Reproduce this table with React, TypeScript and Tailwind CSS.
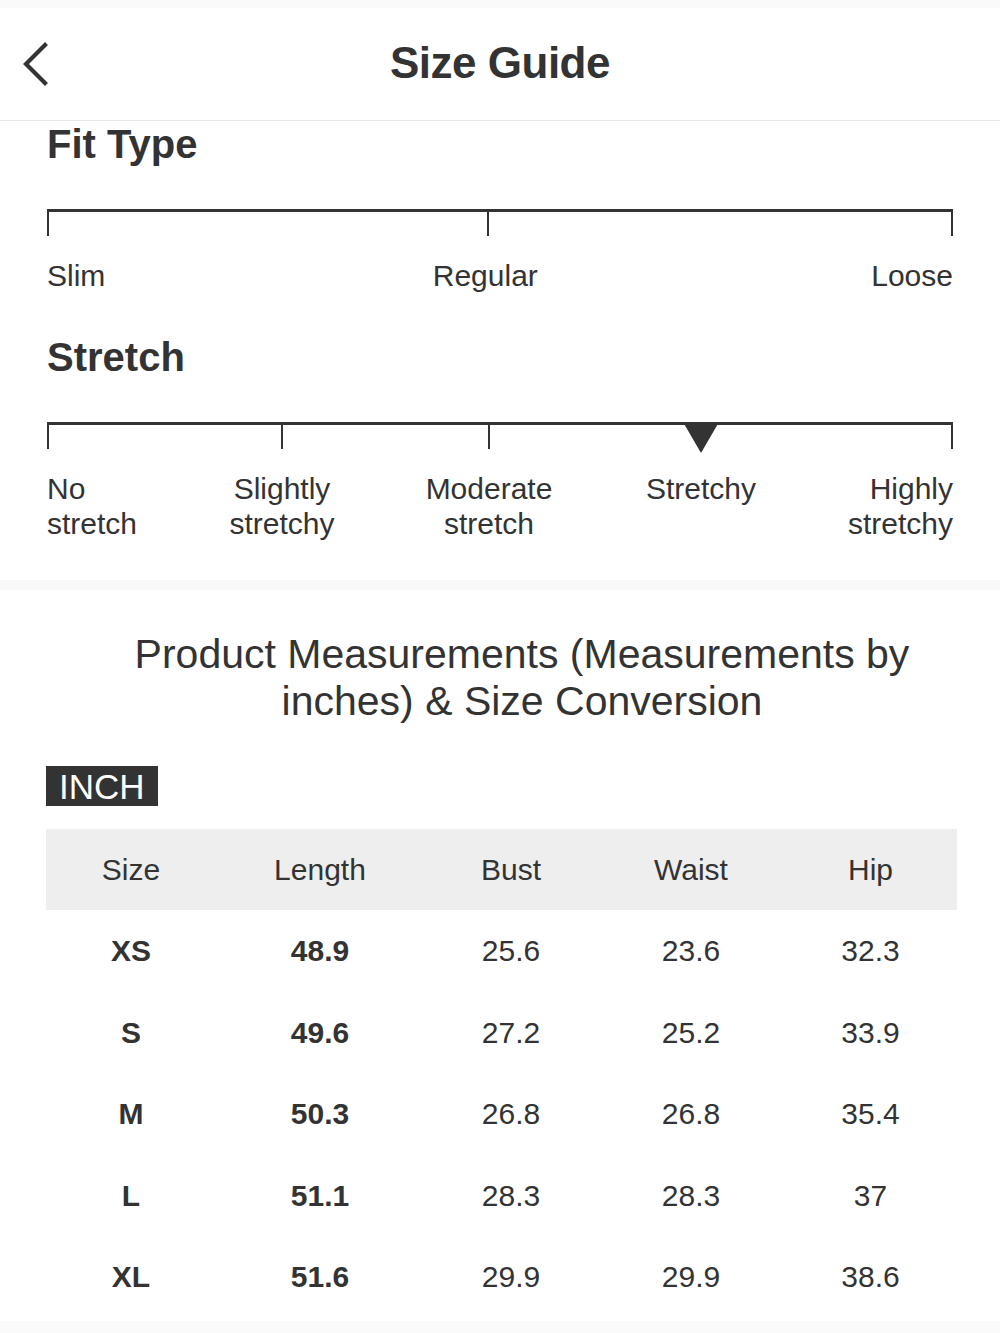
const fitLabels = ["Slim", "Regular", "Loose"]

const stretchLabels = [
  { lines: ["No", "stretch"], pos: 0, align: "left" },
  { lines: ["Slightly", "stretchy"], pos: 235, align: "center" },
  { lines: ["Moderate", "stretch"], pos: 442, align: "center" },
  { lines: ["Stretchy"], pos: 654, align: "center" },
  { lines: ["Highly", "stretchy"], pos: 906, align: "right" },
]

const rows = [
  ["XS", "48.9", "25.6", "23.6", "32.3"],
  ["S", "49.6", "27.2", "25.2", "33.9"],
  ["M", "50.3", "26.8", "26.8", "35.4"],
  ["L", "51.1", "28.3", "28.3", "37"],
  ["XL", "51.6", "29.9", "29.9", "38.6"],
]

const headers = ["Size", "Length", "Bust", "Waist", "Hip"]

export default function App() {
  return (
    <div className="w-[1000px] min-h-[1333px] bg-white text-[#333] font-['Liberation_Sans',Arial,sans-serif]">
      {/* Top bar */}
      <div className="h-[8px] bg-[#fafafa]" />
      <header className="relative flex h-[113px] items-center justify-center border-b border-[#e8e8e8]">
        <button className="absolute left-[19px] top-[34px] p-0">
          <svg width="30" height="44" viewBox="0 0 30 44" fill="none">
            <path d="M26 3 L7 22 L26 41" stroke="#333" strokeWidth="4.2" strokeLinecap="square" />
          </svg>
        </button>
        <h1 className="mt-[-2px] text-[44px] font-bold leading-none tracking-[-0.5px]">Size Guide</h1>
      </header>

      {/* Fit & stretch */}
      <section className="px-[47px] pb-[39px]">
        <h2 className="h-[48px] text-[40px] font-bold leading-[46px]">Fit Type</h2>
        <div className="relative mt-[40px] h-[27px] border-t-[3px] border-[#333]">
          <div className="absolute left-0 top-0 h-full w-[2px] bg-[#333]" />
          <div className="absolute left-[440px] top-0 h-full w-[2px] bg-[#333]" />
          <div className="absolute right-0 top-0 h-full w-[2px] bg-[#333]" />
        </div>
        <div className="mt-[22px] flex justify-between text-[30px] leading-[35px]">
          {fitLabels.map((l, i) => (
            <span key={i} className={i === 1 ? "ml-[-6px]" : ""}>{l}</span>
          ))}
        </div>

        <h2 className="mt-[41px] h-[48px] text-[40px] font-bold leading-[46px]">Stretch</h2>
        <div className="relative mt-[40px] h-[27px] border-t-[3px] border-[#333]">
          <div className="absolute left-0 top-0 h-full w-[2px] bg-[#333]" />
          <div className="absolute left-[234px] top-0 h-full w-[2px] bg-[#333]" />
          <div className="absolute left-[441px] top-0 h-full w-[2px] bg-[#333]" />
          <div className="absolute right-0 top-0 h-full w-[2px] bg-[#333]" />
          <svg className="absolute left-[636px] top-[-3px]" width="36" height="31" viewBox="0 0 36 31">
            <path d="M0 0 H36 L18 31 Z" fill="#333" />
          </svg>
        </div>
        <div className="relative mt-[22px] h-[70px] text-[30px] leading-[35px]">
          {stretchLabels.map((s, i) => (
            <div
              key={i}
              className={
                s.align === "left"
                  ? "absolute left-0 top-0 text-left"
                  : s.align === "right"
                    ? "absolute right-0 top-0 text-right"
                    : "absolute top-0 -translate-x-1/2 text-center whitespace-nowrap"
              }
              style={s.align === "center" ? { left: s.pos } : undefined}
            >
              {s.lines.map((ln, j) => (
                <div key={j}>{ln}</div>
              ))}
            </div>
          ))}
        </div>
      </section>

      <div className="h-[10px] bg-[#f8f8f8]" />

      {/* Measurements */}
      <section className="pl-[46px] pr-[43px]">
        <h2 className="mt-[41px] pl-[41px] text-center text-[41px] leading-[47px] text-[#333]">
          Product Measurements (Measurements by
          <br />
          inches) &amp; Size Conversion
        </h2>
        <div className="mt-[41px] inline-flex h-[40px] items-center bg-[#333] px-[13px] text-[35px] leading-none text-white">
          INCH
        </div>
        <div className="mt-[23px] w-[911px] text-[30px]">
          <div className="grid h-[81px] grid-cols-[170px_208px_174px_186px_173px] items-center bg-[#eeeeee] text-center">
            {headers.map((h) => (
              <div key={h}>{h}</div>
            ))}
          </div>
          {rows.map((r) => (
            <div key={r[0]} className="grid h-[81.5px] grid-cols-[170px_208px_174px_186px_173px] items-center text-center">
              {r.map((c, i) => (
                <div key={i} className={i < 2 ? "font-bold" : ""}>{c}</div>
              ))}
            </div>
          ))}
        </div>
      </section>
      <div className="mt-[3px] h-[12px] bg-[#fafafa]" />
    </div>
  )
}
